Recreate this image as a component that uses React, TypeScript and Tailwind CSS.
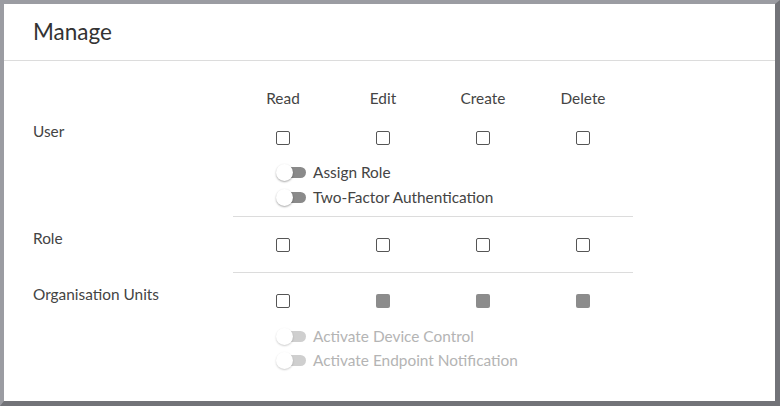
import React from 'react';

type Perm = 'empty' | 'filled';

const cols = ['Read', 'Edit', 'Create', 'Delete'];

function Box({ kind }: { kind: Perm }) {
  return (
    <div className="w-[100px] flex justify-center">
      {kind === 'filled' ? (
        <div className="w-[14px] h-[14px] rounded-[2px] bg-[#8c8c8c]" />
      ) : (
        <div className="w-[14px] h-[14px] rounded-[2px] border border-[#555] bg-white" />
      )}
    </div>
  );
}

function Toggle({ label, disabled }: { label: string; disabled?: boolean }) {
  return (
    <div className="flex items-center h-6 pl-[43px]">
      <div className="relative w-[30px] h-[17px]">
        <div className={`absolute left-[7px] top-[3px] w-[23px] h-[11px] rounded-full ${disabled ? 'bg-[#cfcfcf]' : 'bg-[#8a8a8a]'}`} />
        <div className={`absolute left-0 top-0 w-[17px] h-[17px] rounded-full bg-white ${disabled ? 'shadow-[0_1px_2px_rgba(0,0,0,0.2)]' : 'shadow-[0_1px_2px_rgba(0,0,0,0.35)]'}`} />
      </div>
      <span className={`ml-[7px] text-[15.4px] leading-5 ${disabled ? 'text-[#b4b4b4]' : 'text-[#444]'}`}>{label}</span>
    </div>
  );
}

function Divider() {
  return <div className="ml-[229px] w-[400px] border-t border-[#dcdcdc]" />;
}

export default function App() {
  return (
    <div
      className="w-[780px] h-[406px] box-border bg-white border-t-4 border-l-4 border-t-[#9b9ca2] border-l-[#9b9ca2] border-r-[5px] border-b-[5px] border-r-[#727378] border-b-[#727378]"
      style={{ fontFamily: 'Lato, "Open Sans", sans-serif' }}
    >
      <div className="h-[57px] box-border border-b border-[#dcdcdc] flex items-center pl-[29px]">
        <h1 className="text-[22.5px] text-[#333] leading-none">Manage</h1>
      </div>

      <div className="pt-[27px]">
        {/* column headers */}
        <div className="flex pl-[229px] h-5">
          {cols.map(c => (
            <div key={c} className="w-[100px] text-center text-[15.4px] leading-5 text-[#444]">{c}</div>
          ))}
        </div>

        {/* User */}
        <div className="flex mt-[13px]">
          <div className="w-[229px] pl-[29px] text-[15.4px] leading-5 text-[#444]">User</div>
          <div className="w-[400px]">
            <div className="flex pt-[10px]">
              <Box kind="empty" /><Box kind="empty" /><Box kind="empty" /><Box kind="empty" />
            </div>
            <div className="mt-[15px]">
              <Toggle label="Assign Role" />
              <div className="mt-px"><Toggle label="Two-Factor Authentication" /></div>
            </div>
          </div>
        </div>
        <div className="mt-[7px]"><Divider /></div>

        {/* Role */}
        <div className="flex pt-[11px] pb-[20px]">
          <div className="w-[229px] pl-[29px] text-[15.4px] leading-5 text-[#444]">Role</div>
          <div className="flex pt-[10px]">
            <Box kind="empty" /><Box kind="empty" /><Box kind="empty" /><Box kind="empty" />
          </div>
        </div>
        <Divider />

        {/* Organisation Units */}
        <div className="flex pt-[11px]">
          <div className="w-[229px] pl-[29px] text-[15.4px] leading-5 text-[#444]">Organisation Units</div>
          <div className="w-[400px]">
            <div className="flex pt-[10px]">
              <Box kind="empty" /><Box kind="filled" /><Box kind="filled" /><Box kind="filled" />
            </div>
            <div className="mt-[16px]">
              <Toggle label="Activate Device Control" disabled />
              <Toggle label="Activate Endpoint Notification" disabled />
            </div>
          </div>
        </div>
      </div>
    </div>
  );
}
